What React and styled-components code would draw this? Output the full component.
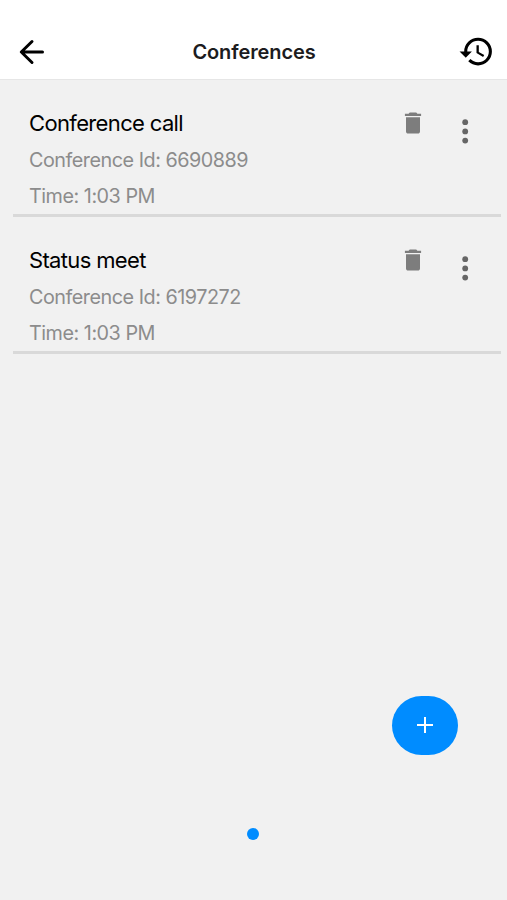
import React from "react";
import styled, { createGlobalStyle } from "styled-components";

const GlobalStyle = createGlobalStyle`
  * {
    box-sizing: border-box;
  }
  body {
    margin: 0;
    background-color: #f1f1f1;
    font-family: Inter, "Liberation Sans", sans-serif;
  }
`;

const Screen = styled.div`
  display: flex;
  flex-direction: column;
  width: 507px;
  height: 900px;
  background-color: #f1f1f1;
`;

const Header = styled.header`
  display: flex;
  align-items: center;
  justify-content: space-between;
  height: 80px;
  padding: 24px 12px 0 14px;
  background-color: #ffffff;
  border-bottom: 1px solid #e6e6e6;
`;

const Title = styled.h1`
  margin: 0;
  font-size: 20px;
  font-weight: 600;
  line-height: 24px;
  letter-spacing: -0.1px;
  color: #1c1c1e;
`;

const IconButton = styled.button`
  display: flex;
  padding: 0;
  border: none;
  background: none;
  color: ${(props) => props.$color || "#000000"};

  svg {
    display: block;
  }
`;

const List = styled.ul`
  margin: 0;
  padding: 0 6px 0 13px;
  list-style: none;
`;

const Row = styled.li`
  display: flex;
  justify-content: space-between;
  height: 137px;
  padding: 29px 32px 0 16px;
  border-bottom: 3px solid #d9d9d9;
`;

const Name = styled.h2`
  margin: 0 0 9px;
  font-size: 22px;
  font-weight: 400;
  line-height: 28px;
  letter-spacing: -0.65px;
  color: #000000;
`;

const Detail = styled.p`
  margin: 0 0 8px;
  font-size: 19.8px;
  line-height: 28px;
  letter-spacing: -0.48px;
  color: #8c8c8c;
`;

const Actions = styled.div`
  display: flex;
  gap: 34px;
`;

const Footer = styled.footer`
  display: flex;
  flex-direction: column;
  margin-top: auto;
  padding: 0 49px 60px;
`;

const AddButton = styled.button`
  display: flex;
  align-items: center;
  justify-content: center;
  align-self: flex-end;
  width: 66px;
  height: 59px;
  margin-bottom: 73px;
  padding: 0 0 1px;
  border: none;
  border-radius: 30px;
  background-color: #008cff;
`;

const PageDot = styled.span`
  align-self: center;
  width: 12px;
  height: 12px;
  margin-right: 2px;
  border-radius: 50%;
  background-color: #008cff;
`;

const BackIcon = () => (
  <svg width="36" height="36" viewBox="0 0 36 36" fill="none">
    <path
      d="M28.500 18H7.500M18 7.500L7.300 18l10.700 10.500"
      stroke="currentColor"
      strokeWidth="3"
      strokeLinecap="round"
      strokeLinejoin="round"
    />
  </svg>
);

const HistoryIcon = () => (
  <svg width="37" height="37" viewBox="0 0 24 24" fill="currentColor">
    <path d="M13 3a9 9 0 0 0-9 9H1l3.900 3.900.1.1L9 12H6c0-3.870 3.130-7 7-7s7 3.130 7 7-3.130 7-7 7c-1.930 0-3.680-.79-4.940-2.060l-1.420 1.420A8.950 8.950 0 0 0 13 21a9 9 0 0 0 0-18zm-1 5v5l4.280 2.540.72-1.210-3.500-2.080V8H12z" />
  </svg>
);

const TrashIcon = () => (
  <svg width="28" height="28" viewBox="0 0 512 512" fill="currentColor">
    <path d="M128 412c0 22 16 38 38 38h180c22 0 38-16 38-38V150H128v262zM404 86h-68c-8-16-20-22-36-22h-88c-16 0-28 6-36 22h-68v42h296V86z" />
  </svg>
);

const MoreIcon = () => (
  <svg width="8" height="28" viewBox="0 0 8 28" fill="currentColor">
    <circle cx="4.200" cy="5.200" r="2.900" />
    <circle cx="4.200" cy="14.400" r="2.900" />
    <circle cx="4.200" cy="23.600" r="2.900" />
  </svg>
);

const PlusIcon = () => (
  <svg width="18" height="18" viewBox="0 0 18 18" fill="none">
    <path d="M9 1v16M1 9h16" stroke="#ffffff" strokeWidth="2" />
  </svg>
);

const MoreButton = styled(IconButton)`
  align-self: flex-start;
  margin-top: 8px;
`;

const DeleteButton = styled(IconButton)`
  align-self: flex-start;
`;

const conferences = [
  { id: "6690889", name: "Conference call", time: "1:03 PM" },
  { id: "6197272", name: "Status meet", time: "1:03 PM" },
];

const ConferenceRow = ({ id, name, time }) => (
  <Row>
    <div>
      <Name>{name}</Name>
      <Detail>Conference Id: {id}</Detail>
      <Detail>Time: {time}</Detail>
    </div>
    <Actions>
      <DeleteButton $color="#7d7d7d" aria-label="Delete">
        <TrashIcon />
      </DeleteButton>
      <MoreButton $color="#666666" aria-label="More">
        <MoreIcon />
      </MoreButton>
    </Actions>
  </Row>
);

const App = () => (
  <Screen>
    <GlobalStyle />
    <Header>
      <IconButton aria-label="Back">
        <BackIcon />
      </IconButton>
      <Title>Conferences</Title>
      <IconButton aria-label="History">
        <HistoryIcon />
      </IconButton>
    </Header>
    <List>
      {conferences.map((conference) => (
        <ConferenceRow key={conference.id} {...conference} />
      ))}
    </List>
    <Footer>
      <AddButton aria-label="Add conference">
        <PlusIcon />
      </AddButton>
      <PageDot />
    </Footer>
  </Screen>
);

export default App;
